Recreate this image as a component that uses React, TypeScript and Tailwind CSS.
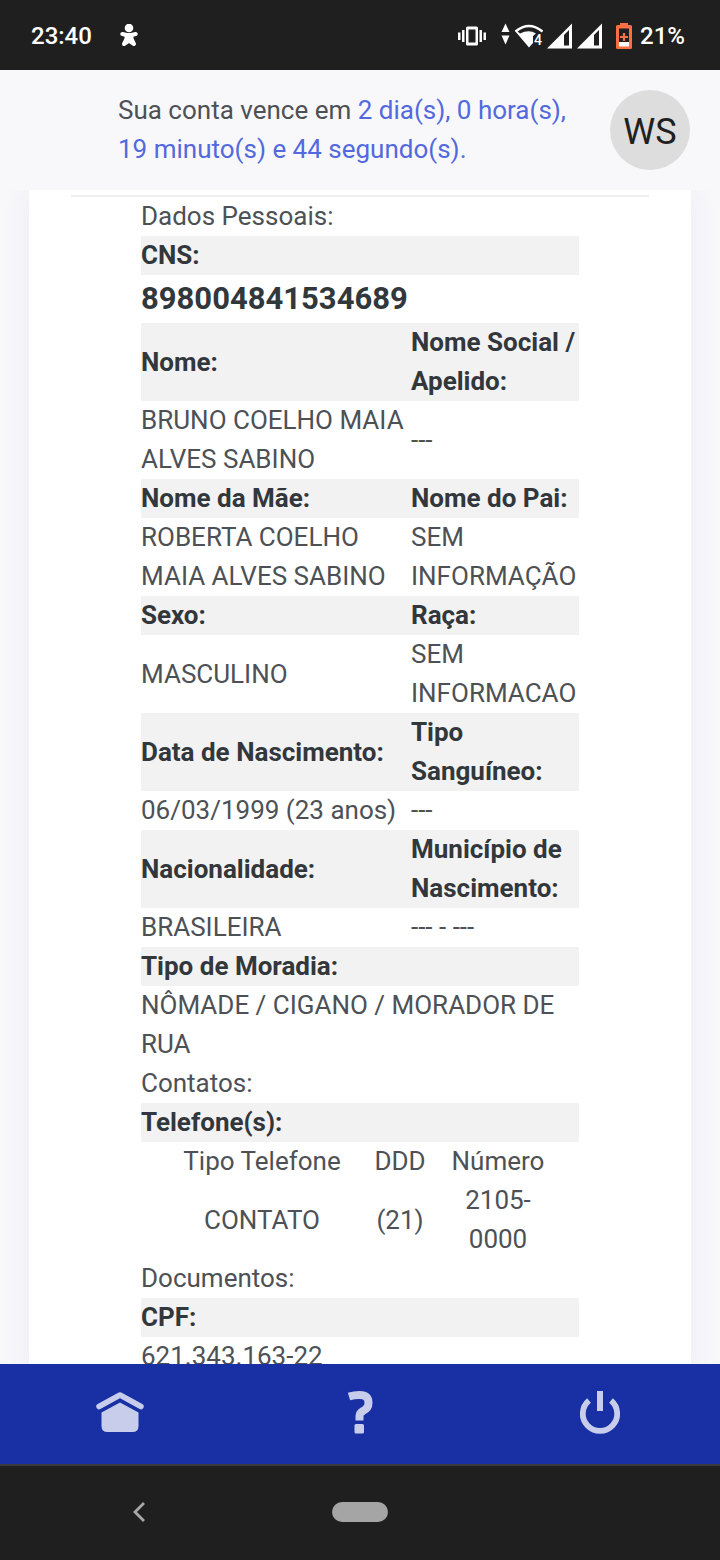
import React from "react";

function StatusBar() {
  return (
    <div className="flex h-[70px] shrink-0 items-center bg-[#1f1f1f] pl-[31px] pr-[35px] pt-0.5 text-2xl font-medium text-white">
      <span>23:40</span>
      <svg className="ml-7 h-6 w-[18px]" viewBox="0 0 18 24" fill="white" stroke="white">
        <circle cx="9" cy="4" r="4.300" stroke="none" />
        <path d="M2.300 10L9 11.500L15.700 10" fill="none" strokeWidth="4" strokeLinecap="round" strokeLinejoin="round" />
        <path d="M6.500 11H11.500L11.500 15L14 20L9 16.500L4 20L6.500 15Z" strokeWidth="4" strokeLinejoin="round" />
      </svg>

      <div className="ml-auto flex items-center">
        <svg className="h-5 w-7" viewBox="0 0 28 20" fill="white">
          <path d="M0 6.500h2.500v7.500H0zM4 4h2.500v12H4zM21.500 4h2.500v12h-2.500zM25.500 6.500h2.500v7.500h-2.500z" />
          <path fillRule="evenodd" d="M9.500 0.500h9a1.500 1.500 0 0 1 1.500 1.500v16a1.500 1.500 0 0 1-1.500 1.500H9.500a1.500 1.500 0 0 1-1.500-1.500V2a1.500 1.500 0 0 1 1.500-1.500zM10.500 3.500v13h7v-13z" />
        </svg>
        <svg className="ml-[15px] h-[26px] w-[42px]" viewBox="0 0 42 26" fill="white">
          <path d="M4.500 0.500L8.500 9H0.500zM0.500 12.500h8L4.500 21.500z" />
          <path d="M14.500 8.500Q28 -2.500 41.500 8.500" fill="none" stroke="white" strokeWidth="2.400" />
          <path d="M14 8L28 24.500L32 20V13L35 10.500Q28 6 19 10.500L16 8z" />
          <text x="33" y="22" fontSize="14" fontWeight="500" fill="white">
            4
          </text>
        </svg>
        <SignalIcon className="ml-1 h-[26px] w-[25px]" />
        <SignalIcon className="ml-[5px] h-[26px] w-[25px]" />
        <svg className="ml-[14px] mr-2 h-[26px] w-4" viewBox="0 0 16 26">
          <path d="M4 0h8v2h2.500Q16 2 16 3.500v21Q16 26 14.500 26h-13Q0 26 0 24.500v-21Q0 2 1.500 2H4z" fill="#fa6f43" />
          <path d="M3 5.500h10v13.500H3z" fill="#1f1f1f" />
          <path d="M3 19h10v4.500H3z" fill="white" />
          <path d="M8 10v8M4 14h8" stroke="#fa6f43" strokeWidth="2.200" />
        </svg>
        <span>21%</span>
      </div>
    </div>
  );
}

function SignalIcon({ className }: { className: string }) {
  return (
    <svg className={className} viewBox="0 0 25 26" fill="white">
      <path fillRule="evenodd" d="M0 25.500L25 0.500V25.500zM17 12V22.500H22V7z" />
    </svg>
  );
}

function AccountHeader() {
  return (
    <header className="z-10 flex shrink-0 items-center justify-between bg-[#f8f8fb] py-5 pl-[118px] pr-[30px]">
      <p className="flex-1 pr-8">
        Sua conta vence em{" "}
        <span className="text-[#5369de]">
          2 dia(s), 0 hora(s), 19 minuto(s) e 44 segundo(s).
        </span>
      </p>
      <button
        type="button"
        className="size-20 shrink-0 rounded-full bg-[#dddddd] pt-1 text-4xl text-[#202020]"
      >
        WS
      </button>
    </header>
  );
}

function HeadRow({ left, right }: { left: string; right?: string }) {
  return (
    <tr className="bg-[#f2f2f2] text-left text-[#32373c]">
      <th className="font-bold" colSpan={right ? 1 : 2}>
        {left}
      </th>
      {right && <th className="font-bold">{right}</th>}
    </tr>
  );
}

function DataRow({ left, right }: { left: string; right?: string }) {
  return (
    <tr>
      <td colSpan={right ? 1 : 2}>{left}</td>
      {right && <td>{right}</td>}
    </tr>
  );
}

function PhoneTable() {
  return (
    <table className="mx-auto w-[398px] table-fixed text-center">
      <thead>
        <tr>
          <th className="w-[202px] font-normal">Tipo Telefone</th>
          <th className="w-[74px] font-normal">DDD</th>
          <th className="font-normal">Número</th>
        </tr>
      </thead>
      <tbody>
        <tr>
          <td>CONTATO</td>
          <td>(21)</td>
          <td className="px-4">2105-0000</td>
        </tr>
      </tbody>
    </table>
  );
}

function PersonalData() {
  return (
    <table className="mx-auto w-[438px] table-fixed">
      <colgroup>
        <col className="w-[270px]" />
        <col />
      </colgroup>
      <tbody>
        <DataRow left="Dados Pessoais:" />
        <HeadRow left="CNS:" />
        <tr>
          <td colSpan={2} className="text-[31px] leading-[48px] font-bold text-[#32373c]">
            898004841534689
          </td>
        </tr>
        <HeadRow left="Nome:" right="Nome Social / Apelido:" />
        <DataRow left="BRUNO COELHO MAIA ALVES SABINO" right="---" />
        <HeadRow left="Nome da Mãe:" right="Nome do Pai:" />
        <DataRow left="ROBERTA COELHO MAIA ALVES SABINO" right="SEM INFORMAÇÃO" />
        <HeadRow left="Sexo:" right="Raça:" />
        <DataRow left="MASCULINO" right="SEM INFORMACAO" />
        <HeadRow left="Data de Nascimento:" right="Tipo Sanguíneo:" />
        <DataRow left="06/03/1999 (23 anos)" right="---" />
        <HeadRow left="Nacionalidade:" right="Município de Nascimento:" />
        <DataRow left="BRASILEIRA" right="--- - ---" />
        <HeadRow left="Tipo de Moradia:" />
        <DataRow left="NÔMADE / CIGANO / MORADOR DE RUA" />
        <DataRow left="Contatos:" />
        <HeadRow left="Telefone(s):" />
        <tr>
          <td colSpan={2}>
            <PhoneTable />
          </td>
        </tr>
        <DataRow left="Documentos:" />
        <HeadRow left="CPF:" />
        <DataRow left="621.343.163-22" />
      </tbody>
    </table>
  );
}

function BottomNav() {
  return (
    <nav className="grid h-[100px] shrink-0 grid-cols-3 bg-[#1830a4] text-[#c8cdec]">
      <button type="button" aria-label="Home" className="flex items-center justify-center">
        <svg className="h-12 w-12" viewBox="0 0 48 48">
          <path d="M3 16.500L24 5L45 16.500" fill="none" stroke="currentColor" strokeWidth="5.500" strokeLinecap="round" strokeLinejoin="round" />
          <path d="M24 12.500L42.500 22.500V36Q42.500 42 36.500 42H11.500Q5.500 42 5.500 36V22.500Z" fill="currentColor" />
        </svg>
      </button>
      <button type="button" aria-label="Ajuda" className="flex items-center justify-center">
        <svg className="h-12 w-12" viewBox="0 0 48 48" fill="none" stroke="currentColor">
          <path d="M13 6.500C17 5.300 20 5 23.500 5C30 5 32.500 8 32.500 13C32.500 17.500 30 19.500 27 21C24 22.800 23.500 24 23.500 26V30.500" strokeWidth="8" />
          <rect x="18.500" y="34" width="9.500" height="9.500" rx="1.500" fill="currentColor" stroke="none" />
        </svg>
      </button>
      <button type="button" aria-label="Sair" className="flex items-center justify-center">
        <svg className="h-12 w-12" viewBox="0 0 48 48" fill="none" stroke="currentColor" strokeWidth="6">
          <path d="M24 1V21" />
          <path d="M13 10.500A17.200 17.200 0 1 0 35 10.500" strokeWidth="5.800" />
        </svg>
      </button>
    </nav>
  );
}

function SystemNav() {
  return (
    <div className="grid h-24 shrink-0 grid-cols-[278px_1fr_278px] items-center border-t-2 border-[#3a3a3c] bg-[#1f1f1f] pb-0.5">
      <button type="button" aria-label="Voltar" className="flex justify-center">
        <svg className="h-6 w-4" viewBox="0 0 16 24" fill="none" stroke="#a8a8a8" strokeWidth="2.800">
          <path d="M13 3L4 12L13 21" />
        </svg>
      </button>
      <button
        type="button"
        aria-label="Início"
        className="h-5 w-14 justify-self-center rounded-full bg-[#a5a5a5]"
      />
    </div>
  );
}

function App() {
  return (
    <div className="flex h-screen flex-col overflow-hidden bg-[#f8f8fb] font-[Roboto,sans-serif] text-[26px] leading-[39px] text-[#4d5156]">
      <StatusBar />
      <AccountHeader />
      <main className="min-h-0 flex-1 overflow-y-auto px-[29px] [scrollbar-width:none]">
        <div className="bg-white px-[42px] pt-[5px] shadow-[0_0_26px_rgba(82,63,145,0.08)]">
          <hr className="border-t-2 border-[#eeeef0]" />
          <PersonalData />
        </div>
      </main>
      <BottomNav />
      <SystemNav />
    </div>
  );
}

export default App;
